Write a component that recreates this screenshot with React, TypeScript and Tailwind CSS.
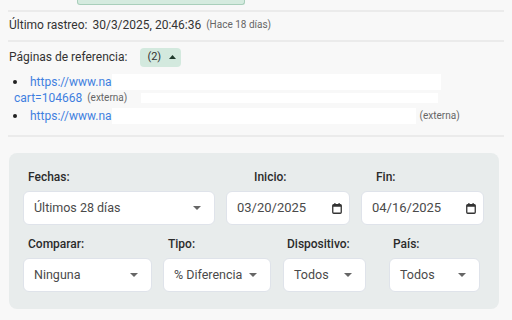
import React from "react";

function Caret() {
  return (
    <svg width="8" height="4" viewBox="0 0 8 4" className="shrink-0">
      <path d="M0 0 L8 0 L4 4 Z" fill="#666" />
    </svg>
  );
}

function CalIcon() {
  return (
    <svg width="10" height="11" viewBox="0 0 10 11" className="shrink-0">
      <rect x="0.75" y="1.75" width="8.5" height="8.5" rx="1" fill="none" stroke="#333" strokeWidth="1.3" />
      <rect x="0.75" y="1.75" width="8.5" height="2" fill="#333" />
      <rect x="2.3" y="0" width="1.2" height="2" fill="#333" />
      <rect x="6.5" y="0" width="1.2" height="2" fill="#333" />
    </svg>
  );
}

function SelectBox({ w, text }: { w: string; text: string }) {
  return (
    <div
      className={`${w} h-[34px] bg-white rounded-[6px] border border-[#dfe3ea] flex items-center justify-between pl-[10px] pr-[13px] text-[12.5px] text-[#4a4a4a]`}
    >
      <span>{text}</span>
      <Caret />
    </div>
  );
}

function DateBox({ w, text }: { w: string; text: string }) {
  return (
    <div
      className={`${w} h-[34px] bg-white rounded-[6px] border border-[#dfe3ea] flex items-center justify-between pl-[10px] pr-[7px] text-[13px] text-[#4a4a4a]`}
    >
      <span>{text}</span>
      <CalIcon />
    </div>
  );
}

function Label({ text, ml }: { text: string; ml: string }) {
  return (
    <div className={`h-[16px] leading-[16px] text-[12px] font-medium text-[#2b2b2b] ${ml} mb-[6px]`}>
      {text}
    </div>
  );
}

export default function App() {
  return (
    <div
      className="w-[512px] h-[320px] overflow-hidden bg-[#f8f8f8] text-[#333]"
      style={{ fontFamily: "Roboto, 'Noto Sans', sans-serif" }}
    >
      <div className="ml-[77px] w-[168px] h-[5px] bg-[#d5ebdf] border-x border-b border-[#a9cfbb] rounded-b-[3px]" />
      <div className="mt-[5px] mx-[8px] h-[2px] bg-[#ebebeb]" />

      <div className="mt-[3px] h-[20px] flex items-center pl-[9px] text-[12px] leading-[20px] text-[#333]">
        <span>Último rastreo:</span>
        <span className="ml-[5px]">30/3/2025, 20:46:36</span>
        <span className="ml-[5px] text-[10px] text-[#666]">(Hace 18 días)</span>
      </div>
      <div className="mt-[5px] mx-[8px] h-[2px] bg-[#ebebeb]" />

      <div className="mt-[5px] h-[20px] flex items-center pl-[9px] text-[12px] text-[#333]">
        <span>Páginas de referencia:</span>
        <div className="ml-[13px] h-[19px] w-[41px] rounded-[4px] bg-[#d3e9de] flex items-center pl-[7px] text-[11px] text-[#333]">
          <span>(2)</span>
          <svg width="7" height="4" viewBox="0 0 7 4" className="ml-[8px]">
            <path d="M0 4 L7 4 L3.5 0 Z" fill="#1f3a2c" />
          </svg>
        </div>
      </div>

      <div className="mt-[7px] text-[12px] leading-[16px]">
        <div className="flex items-center h-[16px]">
          <div className="ml-[13px] w-[4px] h-[4px] rounded-full bg-[#222]" />
          <span className="ml-[13px] text-[#3f7fe0]">https://www.na</span>
          <div className="w-[329px] h-[16px] bg-white" />
        </div>
        <div className="flex items-center h-[16px]">
          <span className="ml-[14px] text-[#3f7fe0]">cart=104668</span>
          <span className="ml-[5px] text-[10px] text-[#666]">(externa)</span>
          <div className="ml-[14px] w-[297px] h-[10px] bg-white" />
        </div>
        <div className="mt-[2px] flex items-center h-[16px]">
          <div className="ml-[13px] w-[4px] h-[4px] rounded-full bg-[#222]" />
          <span className="ml-[13px] text-[#3f7fe0]">https://www.na</span>
          <div className="w-[304px] h-[16px] bg-white" />
          <span className="ml-[4px] text-[10px] text-[#666]">(externa)</span>
        </div>
      </div>
      <div className="mt-[11px] mx-[8px] h-[2px] bg-[#ebebeb]" />

      <div className="mt-[16px] ml-[9px] w-[490px] rounded-[8px] bg-[#e8ecec] pt-[16px] pb-[17px] px-[14px]">
        <div className="flex">
          <div className="w-[192px]">
            <Label text="Fechas:" ml="ml-[5px]" />
            <SelectBox w="w-[192px]" text="Últimos 28 días" />
          </div>
          <div className="ml-[11px] w-[124px]">
            <Label text="Inicio:" ml="ml-[28px]" />
            <DateBox w="w-[124px]" text="03/20/2025" />
          </div>
          <div className="ml-[11px] w-[123px]">
            <Label text="Fin:" ml="ml-[15px]" />
            <DateBox w="w-[123px]" text="04/16/2025" />
          </div>
        </div>
        <div className="mt-[11px] flex">
          <div className="w-[129px]">
            <Label text="Comparar:" ml="ml-[5px]" />
            <SelectBox w="w-[129px]" text="Ninguna" />
          </div>
          <div className="ml-[11px] w-[108px]">
            <Label text="Tipo:" ml="ml-[5px]" />
            <SelectBox w="w-[108px]" text="% Diferencia" />
          </div>
          <div className="ml-[12px] w-[83px]">
            <Label text="Dispositivo:" ml="ml-[4px]" />
            <SelectBox w="w-[83px]" text="Todos" />
          </div>
          <div className="ml-[23px] w-[91px]">
            <Label text="País:" ml="ml-[4px]" />
            <SelectBox w="w-[91px]" text="Todos" />
          </div>
        </div>
      </div>
    </div>
  );
}
